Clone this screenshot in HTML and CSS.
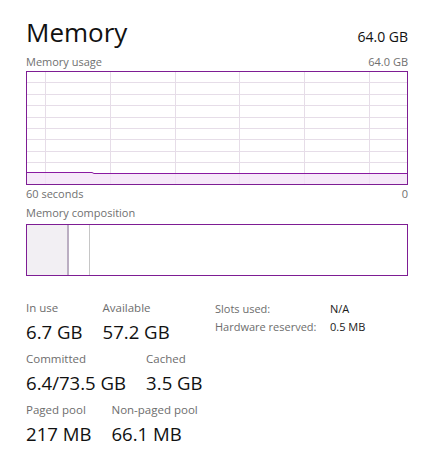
FILE: index.html
```html
<!DOCTYPE html>
<html>
<head>
<meta charset="utf-8">
<link rel="stylesheet" href="styles.css">
</head>
<body>
<div class="page">
  <div class="header">
    <div class="title">Memory</div>
    <div class="total">64.0 GB</div>
  </div>
  <div class="caption caption-top">
    <span>Memory usage</span>
    <span>64.0 GB</span>
  </div>
  <svg class="graph" width="382" height="114" viewBox="0 0 382 114">
    <g class="grid">
      <line x1="19.5" y1="0" x2="19.5" y2="114"/>
      <line x1="84.5" y1="0" x2="84.5" y2="114"/>
      <line x1="149.5" y1="0" x2="149.5" y2="114"/>
      <line x1="213.5" y1="0" x2="213.5" y2="114"/>
      <line x1="278.5" y1="0" x2="278.5" y2="114"/>
      <line x1="343.5" y1="0" x2="343.5" y2="114"/>
      <line x1="0" y1="11.5" x2="382" y2="11.5"/>
      <line x1="0" y1="23.5" x2="382" y2="23.5"/>
      <line x1="0" y1="34.5" x2="382" y2="34.5"/>
      <line x1="0" y1="46.5" x2="382" y2="46.5"/>
      <line x1="0" y1="57.5" x2="382" y2="57.5"/>
      <line x1="0" y1="68.5" x2="382" y2="68.5"/>
      <line x1="0" y1="80.5" x2="382" y2="80.5"/>
      <line x1="0" y1="91.5" x2="382" y2="91.5"/>
    </g>
    <path class="area" d="M1 101 L67 101 L67 102 L381 102 L381 113 L1 113 Z"/>
    <path class="usage" d="M1 101.5 L66 101.5 L68 102.5 L381 102.5"/>
    <rect class="frame" x="0.5" y="0.5" width="381" height="113"/>
  </svg>
  <div class="caption caption-bottom">
    <span>60 seconds</span>
    <span>0</span>
  </div>
  <div class="caption caption-comp">
    <span>Memory composition</span>
  </div>
  <div class="composition">
    <div class="seg seg-inuse"></div>
    <div class="seg seg-modified"></div>
    <div class="seg seg-rest"></div>
  </div>
  <div class="stats">
    <div class="stats-left">
      <div class="stat-row">
        <div class="stat"><div class="label">In use</div><div class="value">6.7 GB</div></div>
        <div class="stat"><div class="label">Available</div><div class="value">57.2 GB</div></div>
      </div>
      <div class="stat-row">
        <div class="stat"><div class="label">Committed</div><div class="value">6.4/73.5 GB</div></div>
        <div class="stat"><div class="label">Cached</div><div class="value">3.5 GB</div></div>
      </div>
      <div class="stat-row">
        <div class="stat"><div class="label">Paged pool</div><div class="value">217 MB</div></div>
        <div class="stat"><div class="label">Non-paged pool</div><div class="value">66.1 MB</div></div>
      </div>
    </div>
    <div class="stats-right">
      <div class="kv"><span class="k">Slots used:</span><span class="v">N/A</span></div>
      <div class="kv"><span class="k">Hardware reserved:</span><span class="v">0.5 MB</span></div>
    </div>
  </div>
</div>
</body>
</html>
```
FILE: styles.css
```css
html, body {
  margin: 0;
  padding: 0;
  background: #ffffff;
}
body {
  font-family: "Open Sans", "Noto Sans", sans-serif;
  color: #000;
}
.page {
  width: 382px;
  padding: 16px 0 0 26px;
}
.header {
  display: flex;
  justify-content: space-between;
  align-items: baseline;
  height: 32px;
}
.title {
  font-size: 26px;
  line-height: 32px;
  color: #111;
}
.total {
  font-size: 14px;
  line-height: 18px;
  color: #111;
}
.caption {
  display: flex;
  justify-content: space-between;
  font-size: 11px;
  line-height: 14px;
  color: #707070;
}
.caption-top { margin-top: 7px; }
.graph {
  display: block;
  margin-top: 2px;
}
.grid line {
  stroke: #e6dde8;
  stroke-width: 1;
}
.area {
  fill: #f4e4f8;
  fill-opacity: 0.8;
}
.usage {
  fill: none;
  stroke: #8a1aa2;
  stroke-width: 1;
}
.frame {
  fill: none;
  stroke: #7e1d94;
  stroke-width: 1;
}
.caption-bottom { margin-top: 2px; }
.caption-comp { margin-top: 5px; }
.composition {
  margin-top: 4px;
  height: 50px;
  border: 1px solid #7e1d94;
  display: flex;
}
.seg-inuse {
  width: 40px;
  background: #f2eff3;
  border-right: 2px solid #bbaec2;
}
.seg-modified {
  width: 20px;
  border-right: 1px solid #c6c6c6;
}
.seg-rest { flex: 1; }
.stats {
  display: flex;
  margin-top: 24px;
}
.stats-left {
  width: 189px;
  display: flex;
  flex-direction: column;
  gap: 7px;
}
.stat-row {
  display: flex;
  gap: 20px;
}
.label {
  font-size: 11.5px;
  line-height: 16px;
  color: #6d6d6d;
}
.value {
  margin-top: 4px;
  font-size: 18.6px;
  line-height: 24px;
  color: #111;
}
.stats-right {
  display: flex;
  flex-direction: column;
}
.kv {
  display: flex;
  font-size: 11px;
  line-height: 18px;
}
.k {
  width: 115px;
  color: #6d6d6d;
}
.v {
  color: #1a1a1a;
  font-size: 11px;
}
```
